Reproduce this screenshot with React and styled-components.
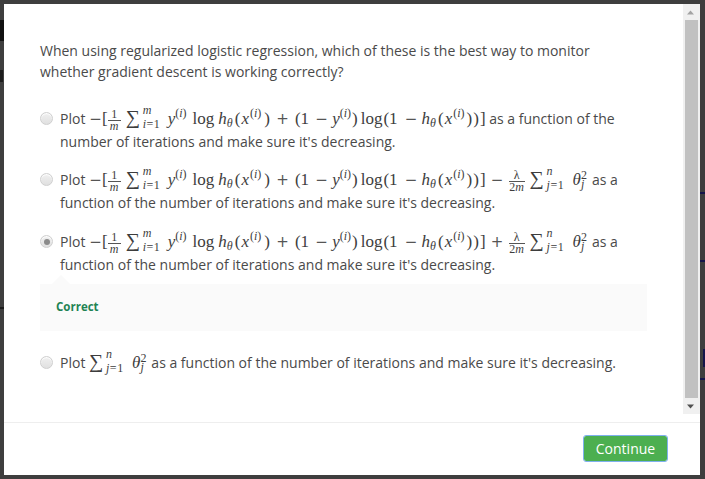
import React from "react";
import styled, { createGlobalStyle } from "styled-components";

const Global = createGlobalStyle`
  html, body { margin: 0; padding: 0; height: 100%; background: #3e3e3e; overflow: hidden; }
  #root { height: 100%; }
`;

const Page = styled.div`
  position: relative;
  box-sizing: border-box;
  width: 705px;
  height: 479px;
  padding: 4px 5px 4px 4px;
  background: #3e3e3e;
  font-family: "Open Sans", sans-serif;
  color: #4c4c4c;
`;

const Mark = styled.i`
  position: absolute;
  left: ${(p) => p.$x}px;
  top: ${(p) => p.$y}px;
  width: ${(p) => p.$w}px;
  height: ${(p) => p.$h}px;
  background: ${(p) => p.$c};
`;

const Modal = styled.div`
  position: relative;
  height: 100%;
  display: flex;
  flex-direction: column;
  background: #fff;
`;

const Body = styled.div`
  display: flex;
  height: 410px;
`;

const Content = styled.div`
  flex: 1;
  min-width: 0;
  padding: 36px 36px 0;
`;

const Question = styled.p`
  margin: 0 0 25px;
  font-size: 14px;
  line-height: 21px;
  color: #4a4a4a;
`;

const Option = styled.div`
  display: flex;
  gap: 7px;
  margin-bottom: ${(p) => p.$mb ?? 15}px;
`;

const Radio = styled.span`
  position: relative;
  flex: none;
  box-sizing: border-box;
  width: 13px;
  height: 13px;
  margin-top: 5px;
  border-radius: 50%;
  border: 1px solid #cfcfcf;
  background: linear-gradient(#f0f0f0, #e0e0e0);
  box-shadow: inset 0 1px 1px #fff;
  ${(p) =>
    p.$checked &&
    `&::after{content:"";position:absolute;left:2.5px;top:2.5px;width:6px;height:6px;border-radius:50%;background:#8b8b8b;}`}
`;

const OptionText = styled.div`
  flex: 1;
  font-size: 14px;
  line-height: 23px;
  color: #4a4a4a;
`;

const MathRun = styled.span`
  font-family: "Liberation Serif", "DejaVu Serif", serif;
  font-size: 17px;
  color: #3d3d3d;
  white-space: nowrap;
  line-height: 0;
`;

const Gap = styled.span`
  display: inline-block;
  width: ${(p) => p.$w}px;
`;

const Op = styled.span`
  display: inline-block;
  width: 13px;
  text-align: center;
  font-family: "DejaVu Sans", sans-serif;
  font-size: 15px;
  font-weight: 400;
  color: #555;
`;

const Var = styled.i`
  font-family: "Liberation Serif", serif;
`;

const Sup = styled.span`
  font-size: 12px;
  vertical-align: ${(p) => p.$up ?? 7}px;
  line-height: 0;
`;

const Sub = styled.span`
  font-size: 12px;
  font-style: italic;
  vertical-align: -3px;
  line-height: 0;
  margin-left: ${(p) => p.$back ?? 0}px;
`;

const Frac = styled.span`
  display: inline-flex;
  flex-direction: column;
  align-items: center;
  width: ${(p) => p.$w ?? 13}px;
  vertical-align: 6px;
  margin: -12px 0;
  font-size: 12px;
  line-height: 11px;
`;

const FracTop = styled.span`
  border-bottom: 1px solid #555;
  align-self: stretch;
  text-align: center;
`;

const Sum = styled.span`
  display: inline-flex;
  align-items: baseline;
  width: 38px;
  margin: -12px 0;
`;

const Sigma = styled.span`
  flex: none;
  width: 17px;
  font-size: 20px;
  line-height: 22px;
`;

const Limits = styled.span`
  display: inline-flex;
  flex-direction: column;
  font-size: 12px;
  line-height: 14px;
  letter-spacing: 0.5px;
  transform: translateY(-10px);
`;

const Feedback = styled.div`
  position: relative;
  box-sizing: border-box;
  height: 47px;
  margin: 0 0 20px;
  padding: 0 0 2px 16px;
  display: flex;
  align-items: center;
  background: #fafafa;
  font-size: 11.5px;
  font-weight: 700;
  color: #1f8354;
  &::before {
    content: "";
    position: absolute;
    left: 12px;
    top: -9px;
    border: 9px solid transparent;
    border-top: 0;
    border-bottom-color: #fafafa;
  }
`;

const Track = styled.div`
  flex: none;
  width: 17px;
  display: flex;
  flex-direction: column;
  align-items: stretch;
  background: #f0f0f0;
`;

const Arrow = styled.div`
  height: 16px;
  display: flex;
  align-items: center;
  justify-content: center;
  padding-right: 2px;
`;

const Thumb = styled.div`
  flex: 1;
  margin: 0 2px 0 2px;
  background: #c1c1c1;
`;

const Footer = styled.div`
  flex: 1;
  display: flex;
  justify-content: flex-end;
  align-items: flex-start;
  border-top: 1px solid #eeeeee;
  margin-top: 8px;
  padding: 13px 33px 0 0;
`;

const Continue = styled.button`
  box-sizing: border-box;
  width: 83px;
  height: 25px;
  border: 0;
  outline: 1px solid #7fb0ee;
  outline-offset: 0;
  border-radius: 2px;
  background: #4caf50;
  color: #fff;
  font-family: "Open Sans", sans-serif;
  font-size: 14px;
  padding: 0;
`;

const Sumi = ({ lo, hi }) => (
  <Sum>
    <Sigma>∑</Sigma>
    <Limits>
      <Var>{hi}</Var>
      <span>
        <Var>{lo}</Var>=1
      </span>
    </Limits>
  </Sum>
);

const Yi = () => (
  <>
    <Var>y</Var>
    <Sup>
      (<Var>i</Var>)
    </Sup>
  </>
);

const Loss = ({ children }) => (
  <MathRun>
    <Op>−</Op>[
    <Frac>
      <FracTop>1</FracTop>
      <Var>m</Var>
    </Frac>
    <Gap $w={5} />
    <Sumi lo="i" hi="m" />
    <Gap $w={4} />
    <Yi />
    <Gap $w={6} />
    log
    <Gap $w={4} />
    <Var>h</Var>
    <Sub>θ</Sub>
    <Gap $w={2} />(<Gap $w={1} />
    <Var>x</Var>
    <Gap $w={1} />
    <Sup>
      (<Var>i</Var>)
    </Sup>
    <Gap $w={3} />)
    <Gap $w={6} />
    <Op>+</Op>
    <Gap $w={6} />
    (1
    <Gap $w={6} />
    <Op>−</Op>
    <Gap $w={4} />
    <Yi />
    <Gap $w={1} />)
    <Gap $w={3} />
    log
    <Gap $w={1} />
    (1
    <Gap $w={7} />
    <Op>−</Op>
    <Gap $w={4} />
    <Var>h</Var>
    <Sub>θ</Sub>
    <Gap $w={2} />(<Gap $w={1} />
    <Var>x</Var>
    <Gap $w={1} />
    <Sup>
      (<Var>i</Var>)
    </Sup>
    <Gap $w={2} />
    )<Gap $w={1} />)<Gap $w={1} />]
    {children}
  </MathRun>
);

const Reg = ({ sign }) => (
  <>
    <Gap $w={5} />
    <Op>{sign}</Op>
    <Gap $w={5} />
    <Frac $w={16}>
      <FracTop>λ</FracTop>
      <span>
        2<Var>m</Var>
      </span>
    </Frac>
    <Gap $w={5} />
    <Theta />
  </>
);

const Theta = () => (
  <>
    <Sumi lo="j" hi="n" />
    <Gap $w={5} />
    <Var>θ</Var>
    <Sup $up={6}>2</Sup>
    <Sub $back={-6}>j</Sub>
    <Gap $w={4} />
  </>
);

export default function App() {
  return (
    <Page>
      <Global />
      <Mark $x={0} $y={20} $w={4} $h={21} $c="#111" />
      <Mark $x={0} $y={70} $w={3} $h={12} $c="#1c1c1c" />
      <Mark $x={0} $y={307} $w={4} $h={2} $c="#1c1c1c" />
      <Mark $x={700} $y={192} $w={5} $h={2} $c="#15154a" />
      <Mark $x={700} $y={260} $w={5} $h={2} $c="#15154a" />
      <Mark $x={700} $y={378} $w={5} $h={2} $c="#15154a" />
      <Mark $x={703} $y={349} $w={2} $h={18} $c="#15154a" />
      <Modal>
        <Body>
          <Content>
            <Question>
              When using regularized logistic regression, which of these is the
              best way to monitor whether gradient descent is working correctly?
            </Question>
            <Option>
              <Radio />
              <OptionText>
                Plot <Loss /> as a function of the number of iterations and make
                sure it's decreasing.
              </OptionText>
            </Option>
            <Option $mb={16}>
              <Radio />
              <OptionText>
                Plot{" "}
                <Loss>
                  <Reg sign="−" />
                </Loss>{" "}
                as a function of the number of iterations and make sure it's
                decreasing.
              </OptionText>
            </Option>
            <Option $mb={8}>
              <Radio $checked />
              <OptionText>
                Plot{" "}
                <Loss>
                  <Reg sign="+" />
                </Loss>{" "}
                as a function of the number of iterations and make sure it's
                decreasing.
              </OptionText>
            </Option>
            <Feedback>Correct</Feedback>
            <Option>
              <Radio />
              <OptionText>
                Plot{" "}
                <MathRun>
                  <Theta />
                </MathRun>{" "}
                as a function of the number of iterations and make sure it's
                decreasing.
              </OptionText>
            </Option>
          </Content>
          <Track>
            <Arrow>
              <svg width="7" height="5" viewBox="0 0 7 5">
                <path d="M3.5 0.5 7 4.5H0z" fill="#a3a3a3" />
              </svg>
            </Arrow>
            <Thumb />
            <Arrow>
              <svg width="7" height="5" viewBox="0 0 7 5">
                <path d="M0 .5h7L3.5 4.5z" fill="#505050" />
              </svg>
            </Arrow>
          </Track>
        </Body>
        <Footer>
          <Continue>Continue</Continue>
        </Footer>
      </Modal>
    </Page>
  );
}
